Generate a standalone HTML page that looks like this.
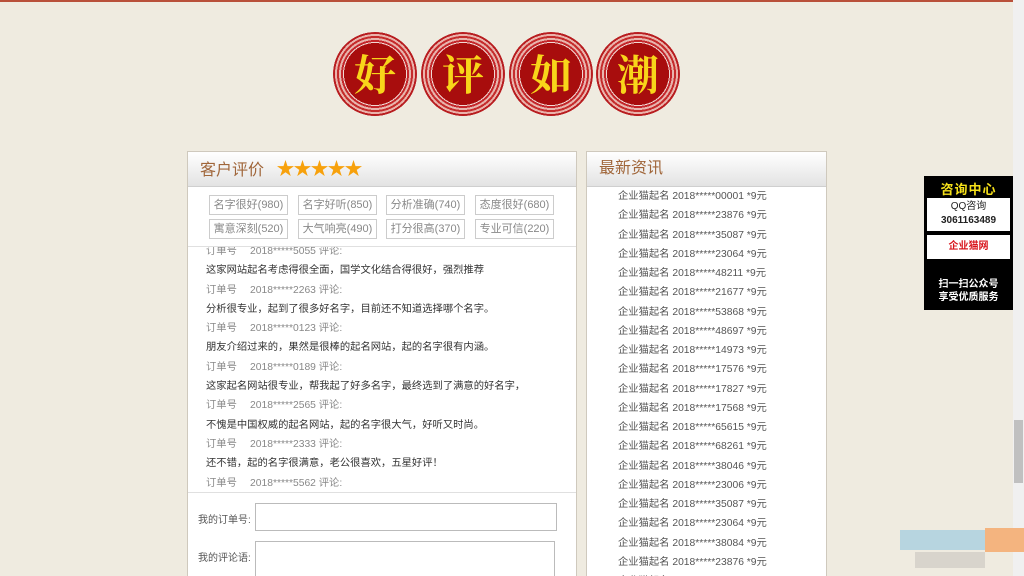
<!DOCTYPE html>
<html style="overflow:hidden"><head><meta charset="utf-8"><style>
html,body{margin:0;width:1024px;height:576px;overflow:hidden}
body{background:#efebe0;font-family:"Liberation Sans","Noto Sans CJK SC",sans-serif;position:relative}
.topline{position:absolute;left:0;top:0;width:1013px;height:2px;background:#b9503a}
.circ{position:absolute;top:32px;width:84px;height:84px;border-radius:50%;background:radial-gradient(circle,#a80d0d 0 31px,#f1d9d4 31px 32px,#c4262a 32px 34px,#e8b5ae 34px 36px,#c52c2c 36px 38px,#eab3ac 38px 40px,#b81d20 40px 42px,transparent 42px)}
.circ span{position:absolute;left:0;right:0;top:17px;text-align:center;font:bold 42px/48px "Noto Serif CJK SC",serif;color:#f8d51a}
.panel{position:absolute;background:#fff;border:1px solid #cfc9bd;overflow:hidden}
.ph{height:34px;background:linear-gradient(#fff,#e3e3e3);border-bottom:1px solid #cfcfcf;font-size:16px;color:#a0663a;line-height:34px;padding-left:12px}
.tags{position:absolute;left:21px;top:43px;width:350px}
.tag{position:absolute;width:77px;height:18px;border:1px solid #ccc;font-size:11px;color:#888;text-align:center;line-height:18px}
.rv{position:absolute;left:18px;font-size:10.3px;line-height:19.3px}
.g{color:#888}.k{color:#333}
.news{position:absolute;left:31px;font-size:10.3px;color:#555;line-height:19.25px}
.side{position:absolute;left:924px;top:176px;width:89px;height:134px;background:#000}
</style></head><body>
<div class="topline"></div>
<div class="circ" style="left:333px"><span>好</span></div>
<div class="circ" style="left:421px"><span>评</span></div>
<div class="circ" style="left:509px"><span>如</span></div>
<div class="circ" style="left:596px"><span>潮</span></div>

<div class="panel" style="left:187px;top:151px;width:388px;height:430px">
<div class="ph">客户评价 <span style="color:#f7a10c;font-size:18px;margin-left:8px;letter-spacing:-1px">★★★★★</span></div>
<div class="tags">
<div class="tag" style="left:0;top:0">名字很好(980)</div><div class="tag" style="left:89px;top:0">名字好听(850)</div><div class="tag" style="left:177px;top:0">分析准确(740)</div><div class="tag" style="left:266px;top:0">态度很好(680)</div>
<div class="tag" style="left:0;top:24px">寓意深刻(520)</div><div class="tag" style="left:89px;top:24px">大气响亮(490)</div><div class="tag" style="left:177px;top:24px">打分很高(370)</div><div class="tag" style="left:266px;top:24px">专业可信(220)</div>
</div>
<div style="position:absolute;left:0;right:0;top:94px;border-top:1px solid #e0e0e0"></div>
<div style="position:absolute;left:0;right:0;top:95px;height:245px;overflow:hidden">
<div class="rv" style="top:-5px">
<div class="g">订单号　 2018*****5055 评论:</div><div class="k">这家网站起名考虑得很全面，国学文化结合得很好，强烈推荐</div>
<div class="g">订单号　 2018*****2263 评论:</div><div class="k">分析很专业，起到了很多好名字，目前还不知道选择哪个名字。</div>
<div class="g">订单号　 2018*****0123 评论:</div><div class="k">朋友介绍过来的，果然是很棒的起名网站，起的名字很有内涵。</div>
<div class="g">订单号　 2018*****0189 评论:</div><div class="k">这家起名网站很专业，帮我起了好多名字，最终选到了满意的好名字，</div>
<div class="g">订单号　 2018*****2565 评论:</div><div class="k">不愧是中国权威的起名网站，起的名字很大气，好听又时尚。</div>
<div class="g">订单号　 2018*****2333 评论:</div><div class="k">还不错，起的名字很满意，老公很喜欢，五星好评！</div>
<div class="g">订单号　 2018*****5562 评论:</div>
</div></div>
<div style="position:absolute;left:0;right:0;top:340px;border-top:1px solid #e0e0e0"></div>
<div style="position:absolute;left:10px;top:359px;font-size:10px;color:#555">我的订单号:</div>
<div style="position:absolute;left:67px;top:351px;width:300px;height:26px;border:1px solid #bbb"></div>
<div style="position:absolute;left:10px;top:397px;font-size:10px;color:#555">我的评论语:</div>
<div style="position:absolute;left:67px;top:389px;width:298px;height:50px;border:1px solid #bbb"></div>
</div>

<div class="panel" style="left:586px;top:151px;width:239px;height:430px">
<div class="ph">最新资讯</div>
<div style="position:absolute;left:0;right:0;top:36px;height:394px;overflow:hidden">
<div class="news" style="top:-1px">
<div>企业猫起名 2018*****00001 *9元</div>
<div>企业猫起名 2018*****23876 *9元</div><div>企业猫起名 2018*****35087 *9元</div><div>企业猫起名 2018*****23064 *9元</div><div>企业猫起名 2018*****48211 *9元</div><div>企业猫起名 2018*****21677 *9元</div><div>企业猫起名 2018*****53868 *9元</div><div>企业猫起名 2018*****48697 *9元</div><div>企业猫起名 2018*****14973 *9元</div><div>企业猫起名 2018*****17576 *9元</div><div>企业猫起名 2018*****17827 *9元</div><div>企业猫起名 2018*****17568 *9元</div><div>企业猫起名 2018*****65615 *9元</div><div>企业猫起名 2018*****68261 *9元</div><div>企业猫起名 2018*****38046 *9元</div><div>企业猫起名 2018*****23006 *9元</div><div>企业猫起名 2018*****35087 *9元</div><div>企业猫起名 2018*****23064 *9元</div><div>企业猫起名 2018*****38084 *9元</div><div>企业猫起名 2018*****23876 *9元</div><div>企业猫起名 2018*****35087 *9元</div>
</div></div></div>

<div class="side">
<div style="color:#f5e01a;font-weight:bold;font-size:13px;text-align:center;margin-top:3px;letter-spacing:1px">咨询中心</div>
<div style="position:absolute;left:3px;top:22px;width:83px;height:33px;background:#fff;text-align:center;font-size:10px;line-height:14px;color:#222;padding-top:2px;box-sizing:border-box">QQ咨询<br><b>3061163489</b></div>
<div style="position:absolute;left:3px;top:59px;width:83px;height:24px;background:#fff;text-align:center;font-size:10px;line-height:24px;color:#d8141c;font-weight:bold">企业猫网</div>
<div style="position:absolute;left:0;right:0;top:102px;text-align:center;color:#fff;font-size:10px;line-height:13px;font-weight:bold">扫一扫公众号<br>享受优质服务</div>
</div>

<div style="position:absolute;left:1013px;top:0;width:11px;height:576px;background:#f0f0f0"></div>
<div style="position:absolute;left:1014px;top:420px;width:9px;height:63px;background:#c0c0c0"></div>
<div style="position:absolute;left:900px;top:530px;width:85px;height:20px;background:#a9cfe0;opacity:.8"></div>
<div style="position:absolute;left:985px;top:528px;width:39px;height:24px;background:#f4b47f"></div>
<div style="position:absolute;left:915px;top:552px;width:70px;height:16px;background:#d8d4cc"></div>
</body></html>
